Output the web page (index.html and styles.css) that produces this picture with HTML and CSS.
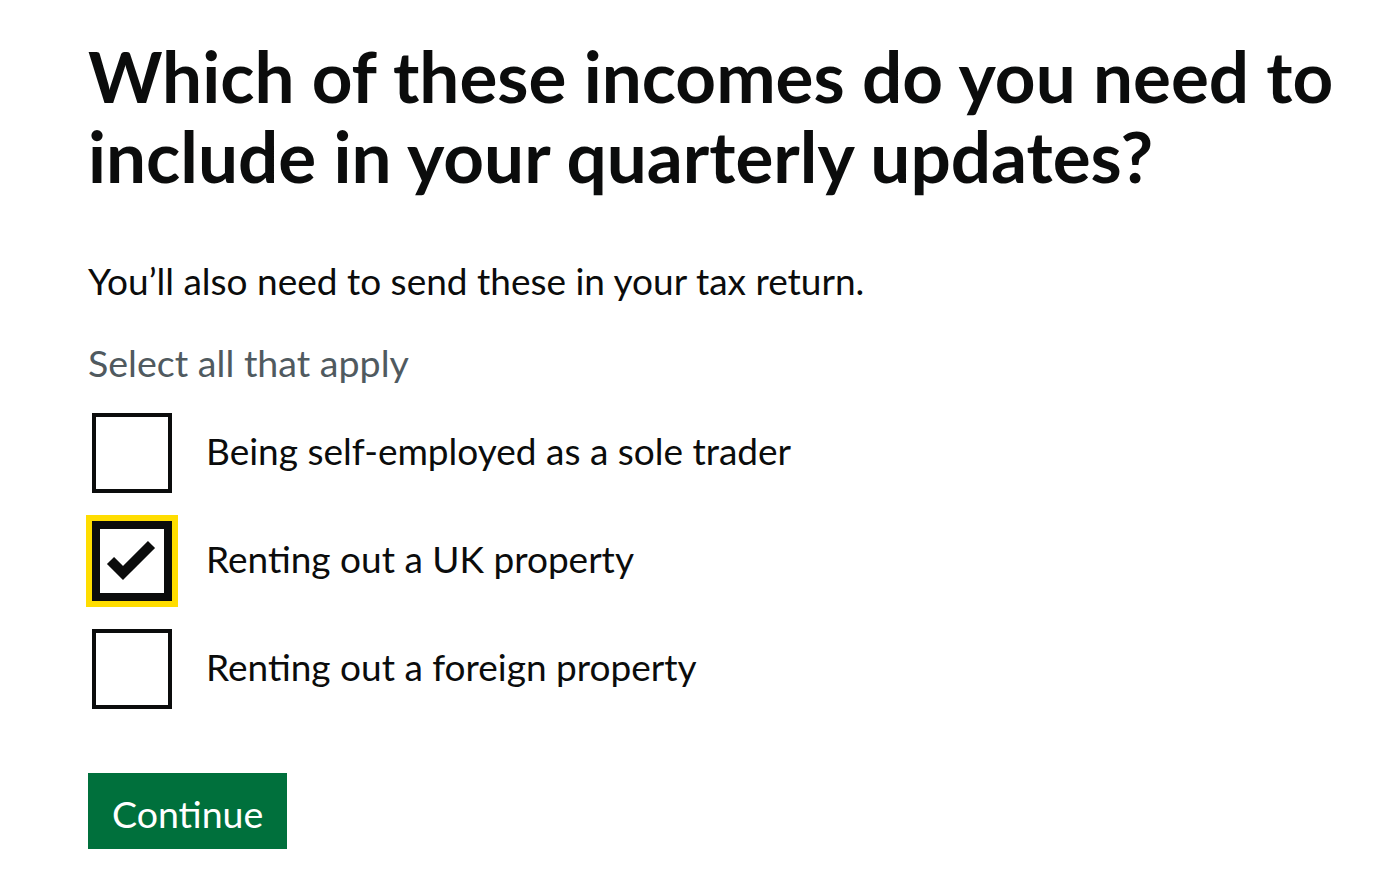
FILE: index.html
```html
<!DOCTYPE html>
<html lang="en">
<head>
<meta charset="utf-8">
<title>Which of these incomes do you need to include in your quarterly updates?</title>
<link rel="stylesheet" href="styles.css">
</head>
<body>
<main class="page">
  <h1 class="heading">Which of these incomes do you need to include in your quarterly updates?</h1>
  <p class="body">You’ll also need to send these in your tax return.</p>
  <div class="hint">Select all that apply</div>
  <div class="checkboxes">
    <div class="item">
      <span class="box"></span>
      <span class="label">Being self-employed as a sole trader</span>
    </div>
    <div class="item">
      <span class="box box--checked">
        <svg class="tick" width="64" height="64" viewBox="0 0 64 64" aria-hidden="true">
          <polyline points="10.5,31.5 23,44 51.5,15.5" fill="none" stroke="#0b0c0c" stroke-width="10" stroke-linejoin="miter"/>
        </svg>
      </span>
      <span class="label">Renting out a UK property</span>
    </div>
    <div class="item">
      <span class="box"></span>
      <span class="label">Renting out a foreign property</span>
    </div>
  </div>
  <button class="button" type="button">Continue</button>
</main>
</body>
</html>
```
FILE: styles.css
```css
html, body {
  margin: 0;
  padding: 0;
  background: #ffffff;
}

body {
  font-family: Lato, "Liberation Sans", Arial, sans-serif;
  color: #0b0c0c;
}

.page {
  padding: 36px 0 0 88px;
}

.heading {
  margin: 0 0 60px;
  max-width: 1290px;
  font-size: 71px;
  font-weight: 700;
  line-height: 80px;
}

.body {
  margin: 0 0 32px;
  font-size: 37px;
  line-height: 50px;
}

.hint {
  margin: 0 0 21px;
  font-size: 37.6px;
  line-height: 50px;
  color: #505a5f;
}

.checkboxes {
  display: flex;
  flex-direction: column;
  gap: 20px;
  margin-bottom: 60px;
}

.item {
  display: flex;
  align-items: flex-start;
  height: 88px;
}

.box {
  box-sizing: border-box;
  flex: 0 0 80px;
  width: 80px;
  height: 80px;
  margin: 4px;
  border: 4px solid #0b0c0c;
  background: #ffffff;
}

.box--checked {
  border-width: 8px;
  box-shadow: 0 0 0 6px #ffdd00;
}

.tick {
  display: block;
}

.label {
  padding: 17px 30px 0;
  font-size: 37px;
  line-height: 50px;
}

.button {
  display: inline-block;
  margin: 0;
  padding: 22px 24px 16px;
  border: 0;
  border-radius: 0;
  background: #00703c;
  box-shadow: 0 4px 0 #002d18;
  color: #ffffff;
  font-family: Lato, "Liberation Sans", Arial, sans-serif;
  font-size: 37.5px;
  line-height: 38px;
  cursor: pointer;
}
```
